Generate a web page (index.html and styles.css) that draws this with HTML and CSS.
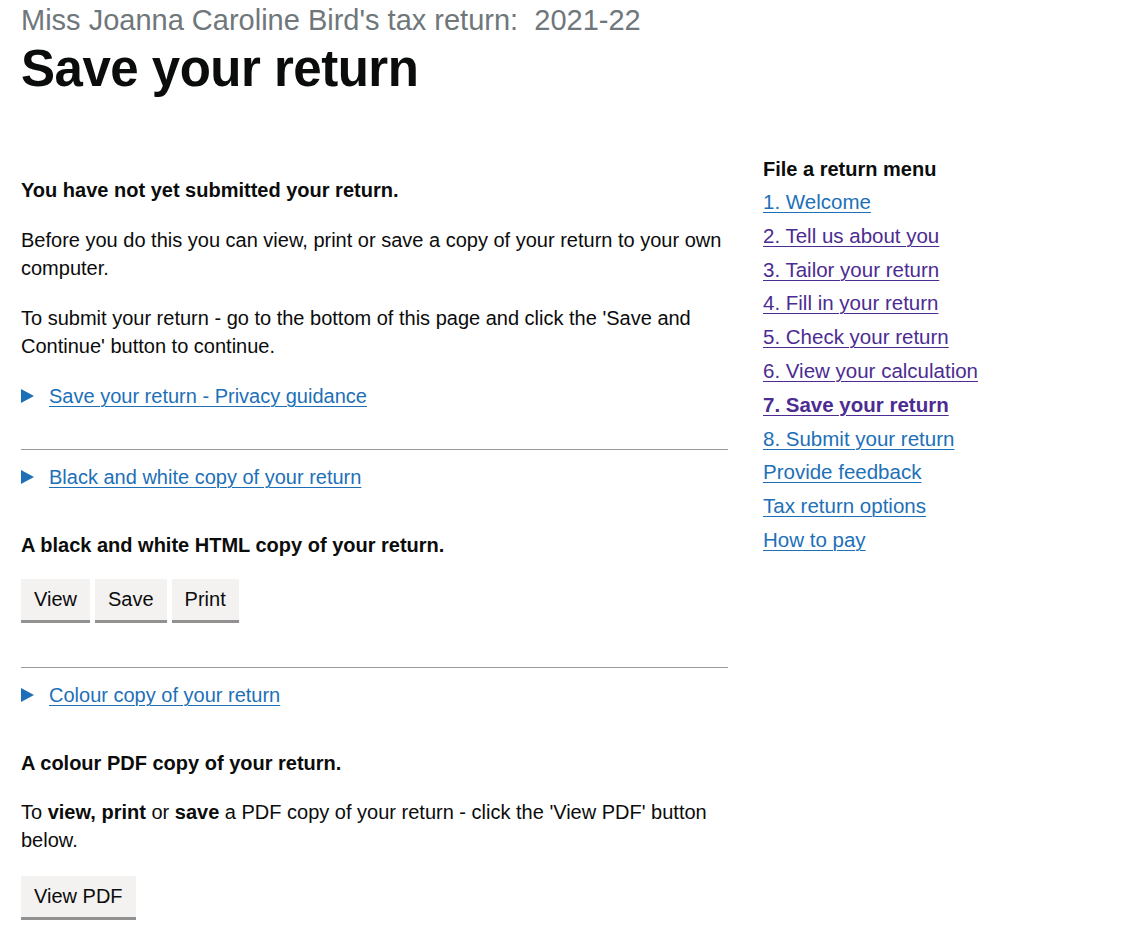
FILE: index.html
```html
<!DOCTYPE html>
<html lang="en">
<head>
<meta charset="utf-8">
<title>Save your return</title>
<link rel="stylesheet" href="styles.css">
</head>
<body>
<div class="page">
  <header class="page-head">
    <span class="caption">Miss Joanna Caroline Bird's tax return:&nbsp; 2021-22</span>
    <h1 class="title">Save your return</h1>
  </header>
  <div class="layout">
    <main class="main">
      <p class="lead bold">You have not yet submitted your return.</p>
      <p class="body">Before you do this you can view, print or save a copy of your return to your own computer.</p>
      <p class="body">To submit your return - go to the bottom of this page and click the 'Save and Continue' button to continue.</p>
      <div class="summary"><span class="arrow"></span><a href="#" class="link">Save your return - Privacy guidance</a></div>
      <hr class="rule">
      <div class="summary"><span class="arrow"></span><a href="#" class="link">Black and white copy of your return</a></div>
      <p class="bold section-head">A black and white HTML copy of your return.</p>
      <div class="buttons first">
        <button class="btn">View</button>
        <button class="btn">Save</button>
        <button class="btn">Print</button>
      </div>
      <hr class="rule">
      <div class="summary"><span class="arrow"></span><a href="#" class="link">Colour copy of your return</a></div>
      <p class="bold section-head">A colour PDF copy of your return.</p>
      <p class="body">To <b class="em">view, print</b> or <b class="em">save</b> a PDF copy of your return - click the 'View PDF' button below.</p>
      <div class="buttons">
        <button class="btn">View PDF</button>
      </div>
    </main>
    <nav class="side">
      <h2 class="side-title">File a return menu</h2>
      <ul class="side-list">
        <li><a href="#" class="link">1. Welcome</a></li>
        <li><a href="#" class="link visited">2. Tell us about you</a></li>
        <li><a href="#" class="link visited">3. Tailor your return</a></li>
        <li><a href="#" class="link visited">4. Fill in your return</a></li>
        <li><a href="#" class="link visited">5. Check your return</a></li>
        <li><a href="#" class="link visited">6. View your calculation</a></li>
        <li><a href="#" class="link visited current">7. Save your return</a></li>
        <li><a href="#" class="link">8. Submit your return</a></li>
        <li><a href="#" class="link">Provide feedback</a></li>
        <li><a href="#" class="link">Tax return options</a></li>
        <li><a href="#" class="link">How to pay</a></li>
      </ul>
    </nav>
  </div>
</div>
</body>
</html>
```
FILE: styles.css
```css
* { box-sizing: border-box; }
html, body { margin: 0; padding: 0; background: #fff; }
body {
  font-family: "Liberation Sans", Arial, sans-serif;
  color: #0b0c0c;
  font-size: 20px;
}
.page { padding: 0 21px; }
.page-head { padding-top: 3px; }
.caption {
  display: block;
  color: #6f777b;
  font-size: 29px;
  line-height: 34px;
}
.title {
  margin: 3px 0 0;
  font-size: 51px;
  line-height: 58px;
  font-weight: 700;
  letter-spacing: -0.5px;
}
.layout {
  display: flex;
  gap: 35px;
  margin-top: 57px;
}
.main { width: 707px; padding-top: 21px; }
.side { flex: 1; }
p { margin: 0 0 22px; line-height: 28px; }
.bold { font-weight: 700; }
.em { font-weight: 700; }
.section-head { margin-top: 40px; margin-bottom: 21px; }
.summary {
  display: flex;
  align-items: center;
  line-height: 28px;
  gap: 15px;
}
.arrow {
  width: 0; height: 0;
  border-style: solid;
  border-width: 7px 0 7px 13px;
  border-color: transparent transparent transparent #1d70b8;
}
.link {
  color: #1d70b8;
  text-decoration: underline;
  text-decoration-thickness: 1px;
  text-underline-offset: 3px;
}
.link.visited { color: #4c2c92; }
.link.current { font-weight: 700; }
.rule {
  border: 0;
  border-top: 1px solid #999;
  margin: 39px 0 13px;
  height: 0;
}
.buttons { display: flex; gap: 5px; }
.btn {
  font-family: inherit;
  font-size: 20px;
  color: #0b0c0c;
  background: #f3f2f1;
  border: 0;
  border-radius: 0;
  box-shadow: 0 3px 0 #929191;
  padding: 0 13px;
  height: 41px;
  line-height: 41px;
  margin-bottom: 3px;
}
.section-head + .buttons { margin-top: -1px; }
.body + .buttons { margin-top: 1px; }
.buttons.first + .rule { margin-top: 44px; }
.side-title {
  margin: 0 0 5px;
  font-size: 20px;
  line-height: 28px;
  font-weight: 700;
}
.side-list { list-style: none; margin: 0; padding: 0; font-size: 20.5px; }
.side-list li { line-height: 28px; margin-bottom: 5.8px; }
```
